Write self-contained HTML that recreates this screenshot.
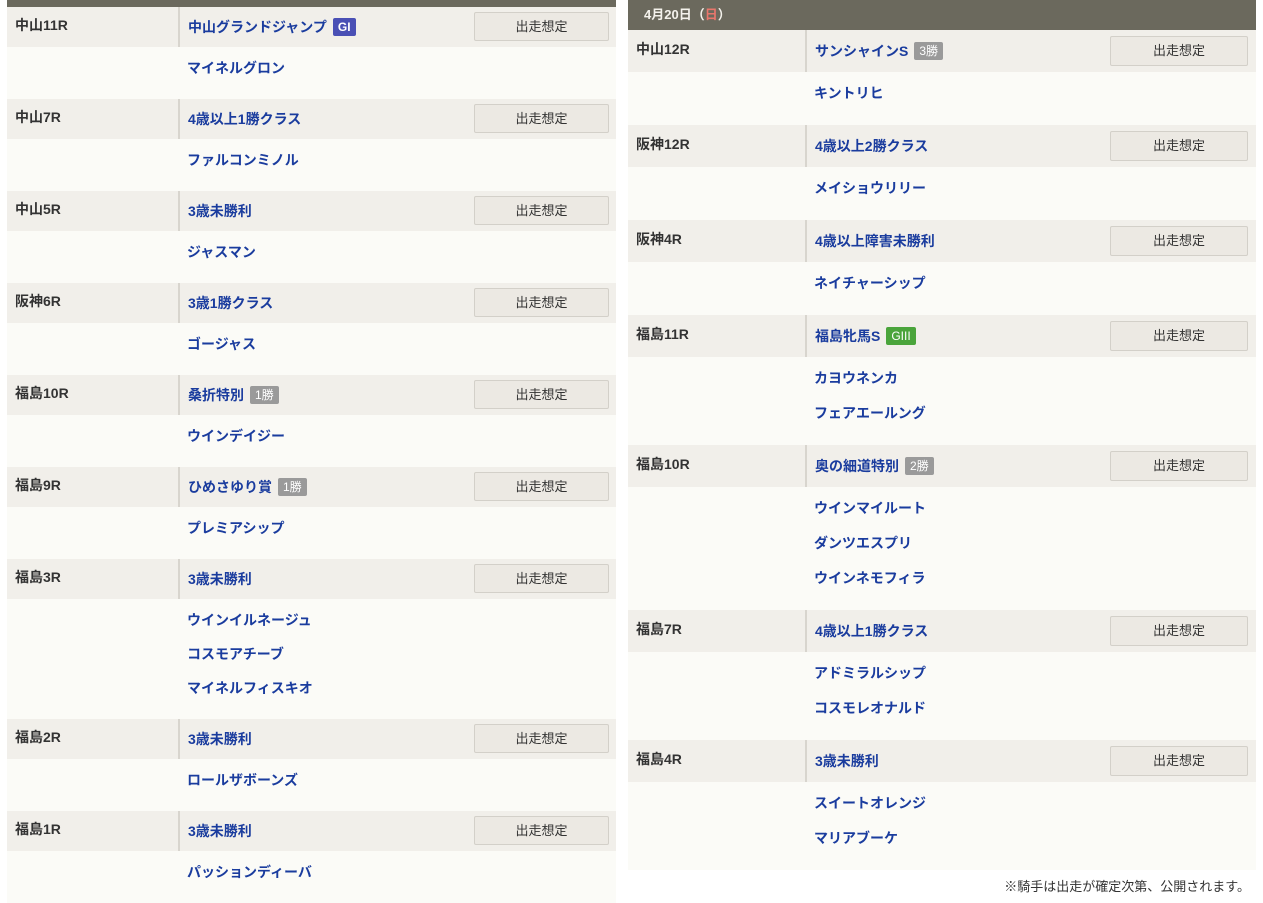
<!DOCTYPE html>
<html><head><meta charset="utf-8"><style>
*{margin:0;padding:0;box-sizing:border-box}
body{width:1263px;height:896px;overflow:hidden;background:#fff;font-family:"Liberation Sans","Noto Sans CJK JP",sans-serif;position:relative}
.col{position:absolute}
#L{left:7px;top:0;width:609px}
#R{left:628px;top:0;width:628px}
.bar{background:#6b695d;color:#fff}
.race .hd{display:flex;align-items:stretch;background:#f1efea;position:relative}
.race .lb{font-size:14px;font-weight:bold;color:#333;padding-left:8px;padding-bottom:5px;border-right:2px solid #d8d5ce;display:flex;align-items:center}
.race .nm{font-size:14px;font-weight:bold;color:#1a3c9e;display:flex;align-items:center;padding-bottom:1px}
.bd{display:inline-block;color:#fff;font-size:12px;font-weight:normal;padding:0 5px;line-height:18px;margin-left:6px;border-radius:2px}
.g1{background:#4a50b5;font-weight:bold}.g3{background:#4aa43b}.gy{background:#9a9a9a}
.btn{position:absolute;border:1px solid #d3d0c9;background:#ece9e3;color:#333;font-size:13px;text-align:center;border-radius:2px}
.hs{background:#fbfbf7}
.hs div{font-size:14px;font-weight:bold;color:#1a3c9e}
#L .hd{height:40px}#L .lb{width:173px}#L .nm{padding-left:8px}
#L .btn{left:467px;top:5px;width:135px;height:29px;line-height:27px}
#L .hs{padding:4px 0 14px 180px}#L .hs div{height:34px;line-height:34px}
#R .hd{height:42px}#R .lb{width:179px}#R .nm{padding-left:8px}
#R .btn{left:482px;top:6px;width:138px;height:30px;line-height:28px}
#R .hs{padding:4px 0 14px 186px}#R .hs div{height:35px;line-height:35px}
</style></head><body>
<div class="col" id="L">
<div class="bar" style="height:7px"></div>
<div class="race"><div class="hd"><div class="lb">中山11R</div><div class="nm">中山グランドジャンプ<span class="bd g1">GI</span></div><div class="btn">出走想定</div></div><div class="hs"><div>マイネルグロン</div></div></div>
<div class="race"><div class="hd"><div class="lb">中山7R</div><div class="nm">4歳以上1勝クラス</div><div class="btn">出走想定</div></div><div class="hs"><div>ファルコンミノル</div></div></div>
<div class="race"><div class="hd"><div class="lb">中山5R</div><div class="nm">3歳未勝利</div><div class="btn">出走想定</div></div><div class="hs"><div>ジャスマン</div></div></div>
<div class="race"><div class="hd"><div class="lb">阪神6R</div><div class="nm">3歳1勝クラス</div><div class="btn">出走想定</div></div><div class="hs"><div>ゴージャス</div></div></div>
<div class="race"><div class="hd"><div class="lb">福島10R</div><div class="nm">桑折特別<span class="bd gy">1勝</span></div><div class="btn">出走想定</div></div><div class="hs"><div>ウインデイジー</div></div></div>
<div class="race"><div class="hd"><div class="lb">福島9R</div><div class="nm">ひめさゆり賞<span class="bd gy">1勝</span></div><div class="btn">出走想定</div></div><div class="hs"><div>プレミアシップ</div></div></div>
<div class="race"><div class="hd"><div class="lb">福島3R</div><div class="nm">3歳未勝利</div><div class="btn">出走想定</div></div><div class="hs"><div>ウインイルネージュ</div><div>コスモアチーブ</div><div>マイネルフィスキオ</div></div></div>
<div class="race"><div class="hd"><div class="lb">福島2R</div><div class="nm">3歳未勝利</div><div class="btn">出走想定</div></div><div class="hs"><div>ロールザボーンズ</div></div></div>
<div class="race"><div class="hd"><div class="lb">福島1R</div><div class="nm">3歳未勝利</div><div class="btn">出走想定</div></div><div class="hs"><div>パッションディーバ</div></div></div>
</div>
<div class="col" id="R">
<div class="bar" style="height:30px;line-height:30px;padding-left:16px;font-size:13px;font-weight:bold;color:#f4f2ec">4月20日（<span style="color:#e8766c">日</span>）</div>
<div class="race"><div class="hd"><div class="lb">中山12R</div><div class="nm">サンシャインS<span class="bd gy">3勝</span></div><div class="btn">出走想定</div></div><div class="hs"><div>キントリヒ</div></div></div>
<div class="race"><div class="hd"><div class="lb">阪神12R</div><div class="nm">4歳以上2勝クラス</div><div class="btn">出走想定</div></div><div class="hs"><div>メイショウリリー</div></div></div>
<div class="race"><div class="hd"><div class="lb">阪神4R</div><div class="nm">4歳以上障害未勝利</div><div class="btn">出走想定</div></div><div class="hs"><div>ネイチャーシップ</div></div></div>
<div class="race"><div class="hd"><div class="lb">福島11R</div><div class="nm">福島牝馬S<span class="bd g3">GIII</span></div><div class="btn">出走想定</div></div><div class="hs"><div>カヨウネンカ</div><div>フェアエールング</div></div></div>
<div class="race"><div class="hd"><div class="lb">福島10R</div><div class="nm">奥の細道特別<span class="bd gy">2勝</span></div><div class="btn">出走想定</div></div><div class="hs"><div>ウインマイルート</div><div>ダンツエスプリ</div><div>ウインネモフィラ</div></div></div>
<div class="race"><div class="hd"><div class="lb">福島7R</div><div class="nm">4歳以上1勝クラス</div><div class="btn">出走想定</div></div><div class="hs"><div>アドミラルシップ</div><div>コスモレオナルド</div></div></div>
<div class="race"><div class="hd"><div class="lb">福島4R</div><div class="nm">3歳未勝利</div><div class="btn">出走想定</div></div><div class="hs"><div>スイートオレンジ</div><div>マリアブーケ</div></div></div>
<div style="text-align:right;font-size:13px;color:#333;padding-top:6px;padding-right:6px">※騎手は出走が確定次第、公開されます。</div>
</div>
</body></html>
